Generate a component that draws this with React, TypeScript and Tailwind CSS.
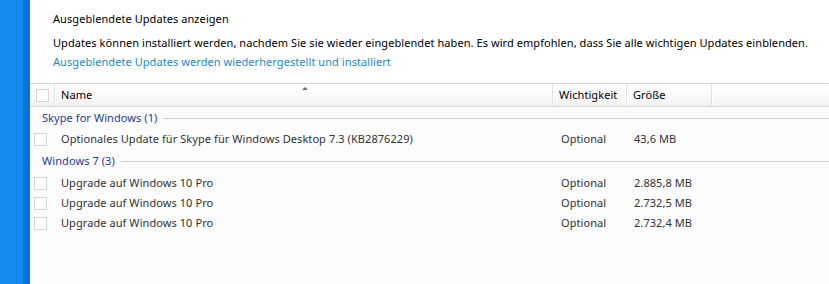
const FONT = { fontFamily: '"Noto Sans", "Open Sans", sans-serif' }

type Row = { name: string; importance: string; size: string }

const groups: { title: string; rows: Row[] }[] = [
  {
    title: 'Skype for Windows (1)',
    rows: [
      {
        name: 'Optionales Update für Skype für Windows Desktop 7.3 (KB2876229)',
        importance: 'Optional',
        size: '43,6 MB',
      },
    ],
  },
  {
    title: 'Windows 7 (3)',
    rows: [
      { name: 'Upgrade auf Windows 10 Pro', importance: 'Optional', size: '2.885,8 MB' },
      { name: 'Upgrade auf Windows 10 Pro', importance: 'Optional', size: '2.732,5 MB' },
      { name: 'Upgrade auf Windows 10 Pro', importance: 'Optional', size: '2.732,4 MB' },
    ],
  },
]

function Checkbox() {
  return <span className="block w-[13px] h-[13px] border border-[#d4d4d4] bg-white" />
}

function HeaderCell({ children, className }: { children?: React.ReactNode; className: string }) {
  return (
    <div className={`flex items-center h-full border-r border-[#e2e2e2] shadow-[1px_0_0_#ffffff] ${className}`}>
      {children}
    </div>
  )
}

export default function App() {
  return (
    <div
      className="flex w-[829px] h-[284px] overflow-hidden text-[11px] tracking-[0.07px] leading-[16px]"
      style={FONT}
    >
      {/* taskbar / window edge */}
      <div className="w-[23px] bg-[#1489ef]" />
      <div className="w-[7px] bg-[#0a72d6]" />

      <div className="flex-1 flex flex-col bg-white">
        {/* intro text */}
        <div className="pl-[23px] pt-[11px] pb-[13px] text-black">
          <p>Ausgeblendete Updates anzeigen</p>
          <p className="mt-[8px]">
            Updates können installiert werden, nachdem Sie sie wieder eingeblendet haben. Es wird
            empfohlen, dass Sie alle wichtigen Updates einblenden.
          </p>
          <p className="mt-[3px] text-[#1c8ac4]">Ausgeblendete Updates werden wiederhergestellt und installiert</p>
        </div>

        {/* list */}
        <div className="flex-1 flex flex-col bg-[#fcfcfc] border-t border-[#d5d5d5]">
          <div className="flex h-[23px] border-b border-[#d5d5d5] bg-gradient-to-b from-white to-[#f3f3f3] text-black">
            <HeaderCell className="w-[25px] pl-[6px]">
              <Checkbox />
            </HeaderCell>
            <HeaderCell className="relative w-[498px] pl-[6px]">
              Name
              {/* sort indicator */}
              <span className="absolute top-[3px] left-[247px] w-0 h-0 border-x-[3px] border-x-transparent border-b-[3px] border-b-[#707070]" />
            </HeaderCell>
            <HeaderCell className="w-[74px] pl-[6px]">Wichtigkeit</HeaderCell>
            <HeaderCell className="w-[85px] pl-[6px]">Größe</HeaderCell>
            <div className="flex-1" />
          </div>

          {groups.map((g, gi) => (
            <div key={g.title} className={gi === 0 ? '' : 'mt-[1px]'}>
              <div className="flex items-center h-[22px] pl-[12px] text-[#1e3c94]">
                <span>{g.title}</span>
                <span className="flex-1 ml-[6px] h-px bg-[#d0d0d0]" />
              </div>
              <div className={gi === 0 ? '' : 'pt-[1px]'}>
                {g.rows.map((r, i) => (
                  <div key={i} className="flex items-center h-[20px] text-[#333333]">
                    <div className="w-[25px] pl-[4px]">
                      <Checkbox />
                    </div>
                    <div className="w-[506px] pl-[6px]">{r.name}</div>
                    <div className="w-[73px]">{r.importance}</div>
                    <div>{r.size}</div>
                  </div>
                ))}
              </div>
            </div>
          ))}
        </div>
      </div>
    </div>
  )
}
